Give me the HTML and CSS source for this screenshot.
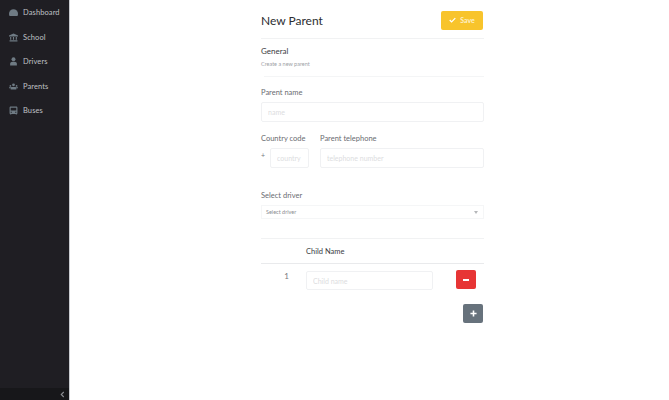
FILE: index.html
```html
<!DOCTYPE html>
<html lang="en">
<head>
    <meta charset="UTF-8">
    <meta name="viewport" content="width=device-width, initial-scale=1.0">
    <title>New Parent</title>

    <link rel="stylesheet" href="styles.css">
</head>
<body>
    <div class="sidebar">
        <ul class="menu">
            <li>
                <svg class="icon" viewBox="0 0 16 16"><path d="M8 2a8 8 0 0 0-8 8c0 1.500.4 2.800 1 4h14c.6-1.200 1-2.500 1-4a8 8 0 0 0-8-8z"/></svg>
                Dashboard
            </li>
            <li>
                <svg class="icon" viewBox="0 0 16 16"><path d="M8 1 0 4.500V6h16V4.500zM2 7v5h2V7zm5 0v5h2V7zm5 0v5h2V7zM1 13v2h14v-2z"/></svg>
                School
            </li>
            <li>
                <svg class="icon" viewBox="0 0 16 16"><circle cx="8" cy="4" r="3.500"/><path d="M2 15v-3c0-2 2-3.500 4-3.500h4c2 0 4 1.500 4 3.500v3z"/></svg>
                Drivers
            </li>
            <li>
                <svg class="icon" viewBox="0 0 16 16"><circle cx="8" cy="5" r="2.500"/><circle cx="2.500" cy="7" r="1.500"/><circle cx="13.500" cy="7" r="1.500"/><path d="M0 9.500h4v-.500h8v.500h4V11h-3v2.500H3V11H0z"/></svg>
                Parents
            </li>
            <li>
                <svg class="icon" viewBox="0 0 16 16"><path d="M3 1h10c1 0 2 1 2 2v10c0 .6-.4 1-1 1v1h-2v-1H4v1H2v-1c-.6 0-1-.4-1-1V3c0-1 1-2 2-2zm0 2v5h10V3zm0 7v2h2v-2zm8 0v2h2v-2z" fill-rule="evenodd"/></svg>
                Buses
            </li>
        </ul>
        <div class="collapse">
            <svg class="chevron" viewBox="0 0 6 8"><path d="M4.500 1 1.500 4l3 3" fill="none" stroke="#8b8d92" stroke-width="1.300"/></svg>
        </div>
    </div>

    <div class="main">
        <div class="content">
            <div class="head">
                <h1>New Parent</h1>
                <button class="btn btn-save">
                    <svg class="check" viewBox="0 0 10 8"><path d="M1 4l2.700 2.700L9 1.300" fill="none" stroke="#fff" stroke-width="1.800"/></svg>
                    Save
                </button>
            </div>

            <div class="general">
                <h2>General</h2>
                <p>Create a new parent</p>
            </div>
            <div class="rule"></div>

            <div class="field">
                <label>Parent name</label>
                <input class="input" placeholder="name">
            </div>

            <div class="phone">
                <div class="code">
                    <label>Country code</label>
                    <div class="code-row">
                        <span class="plus">+</span>
                        <input class="input" placeholder="country">
                    </div>
                </div>
                <div class="tel">
                    <label>Parent telephone</label>
                    <input class="input" placeholder="telephone number">
                </div>
            </div>

            <div class="driver">
                <label>Select driver</label>
                <div class="select">
                    <span>Select driver</span>
                    <span class="arrow"></span>
                </div>
            </div>

            <div class="table-head">Child Name</div>
            <div class="child">
                <span class="num">1</span>
                <input class="input" placeholder="Child name">
                <button class="btn btn-minus"><span class="bar"></span></button>
            </div>
            <div class="add">
                <button class="btn btn-plus">
                    <svg class="cross" viewBox="0 0 8 8"><path d="M4 .500v7M.500 4h7" fill="none" stroke="#fff" stroke-width="1.800"/></svg>
                </button>
            </div>
        </div>
    </div>
</body>
</html>
```

FILE: styles.css
```css
*{
    box-sizing: border-box;
}

body{
    display: flex;
    height: 400px;
    margin: 0;
    overflow: hidden;
    font-family: "Lato", "Open Sans", sans-serif;
    color: #3a3b3f;
    background-color: #fff;
}

/* 左侧菜单 */
.sidebar{
    display: flex;
    flex-direction: column;
    justify-content: space-between;
    width: 70px;
    height: 400px;
    border-right: 1px solid #c9cbd0;
    background-color: #1f1e23;
}

.menu{
    margin: 0;
    padding: .3px 0 0;
    list-style: none;
}

.menu li{
    display: flex;
    align-items: center;
    gap: 5px;
    height: 24.500px;
    padding-left: 9px;
    font-size: 7.500px;
    letter-spacing: .1px;
    color: #bfc1c5;
}

.icon{
    width: 9px;
    height: 9px;
    fill: #6f7b84;
}

.collapse{
    display: flex;
    justify-content: flex-end;
    align-items: center;
    height: 12px;
    padding-right: 4px;
    background-color: #17171a;
}

.chevron{
    width: 5px;
    height: 7px;
}

/* 主体 */
.main{
    flex: 1;
    padding-left: 191px;
}

.content{
    width: 223px;
    padding-top: 11px;
}

.head{
    display: flex;
    justify-content: space-between;
    align-items: center;
    height: 28px;
    padding-bottom: 9px;
    border-bottom: 1px solid #f1f2f3;
}

h1{
    margin: 0;
    font-size: 12px;
    font-weight: 400;
    color: #2c2d31;
}

.btn{
    display: flex;
    justify-content: center;
    align-items: center;
    padding: 0;
    border: 0;
    border-radius: 2px;
}

.btn-save{
    gap: 4px;
    width: 42px;
    height: 19px;
    margin-right: 1px;
    font-family: inherit;
    font-size: 7px;
    font-weight: 700;
    color: #fdf0c8;
    background-color: #f8c42c;
}

.check{
    width: 7px;
    height: 6px;
}

.general{
    height: 37px;
    padding-top: 7px;
}

.rule{
    height: 1px;
    margin-left: 3px;
    background-color: #f4f5f6;
}

h2{
    margin: 0;
    font-size: 8px;
    font-weight: 400;
    line-height: 11px;
    color: #3a3b3f;
}

.general p{
    margin: 3px 0 0;
    font-size: 5.500px;
    line-height: 8px;
    color: #a0a2a6;
}

label{
    display: block;
    height: 10px;
    font-size: 7.500px;
    line-height: 10px;
    color: #6a6c71;
}

.input{
    display: block;
    width: 100%;
    height: 20px;
    padding: 0 6px;
    border: 1px solid #f0f1f3;
    border-radius: 2px;
    outline: none;
    font-family: inherit;
    font-size: 7px;
    background-color: #fff;
}

.input::placeholder{
    color: #dcdde0;
}

.field{
    padding-top: 11px;
}

.field label{
    margin-bottom: 4px;
}

.phone{
    display: flex;
    gap: 13px;
    margin-top: 12px;
}

.phone label{
    margin-bottom: 4px;
    white-space: nowrap;
}

.code{
    width: 46px;
}

.code-row{
    display: flex;
    align-items: flex-start;
    gap: 5px;
}

.plus{
    width: 4px;
    padding-top: 3px;
    font-size: 7px;
    color: #77797e;
}

.code-row .input{
    width: 39px;
    flex: none;
}

.tel{
    flex: 1;
}

.driver{
    margin-top: 23px;
}

.driver label{
    margin-bottom: 4px;
}

.select{
    display: flex;
    justify-content: space-between;
    align-items: center;
    height: 14px;
    padding: 0 5px 0 4px;
    border: 1px solid #f5f6f7;
    font-size: 5.500px;
    color: #8a8c90;
}

.arrow{
    width: 0;
    height: 0;
    border-top: 3px solid #b5b7ba;
    border-left: 2px solid transparent;
    border-right: 2px solid transparent;
}

.table-head{
    height: 26px;
    margin-top: 19px;
    padding: 1px 0 0 45px;
    border-top: 1px solid #f1f2f3;
    border-bottom: 1px solid #e9eaec;
    font-size: 7.500px;
    line-height: 24px;
    color: #3a3b3f;
}

.child{
    display: flex;
    align-items: flex-start;
    padding-top: 7px;
}

.num{
    width: 45px;
    padding-right: 17px;
    font-size: 8px;
    line-height: 10px;
    text-align: right;
    color: #77797e;
}

.child .input{
    width: 127px;
    height: 19px;
    flex: none;
}

.btn-minus{
    width: 20px;
    height: 19px;
    margin: -1px 0 0 23px;
    background-color: #e73535;
}

.bar{
    width: 6px;
    height: 2px;
    background-color: #fff;
}

.add{
    display: flex;
    justify-content: flex-end;
    margin-top: 14px;
    padding-right: 1px;
}

.btn-plus{
    width: 20px;
    height: 19px;
    background-color: #67727c;
}

.cross{
    width: 7px;
    height: 7px;
}
```
